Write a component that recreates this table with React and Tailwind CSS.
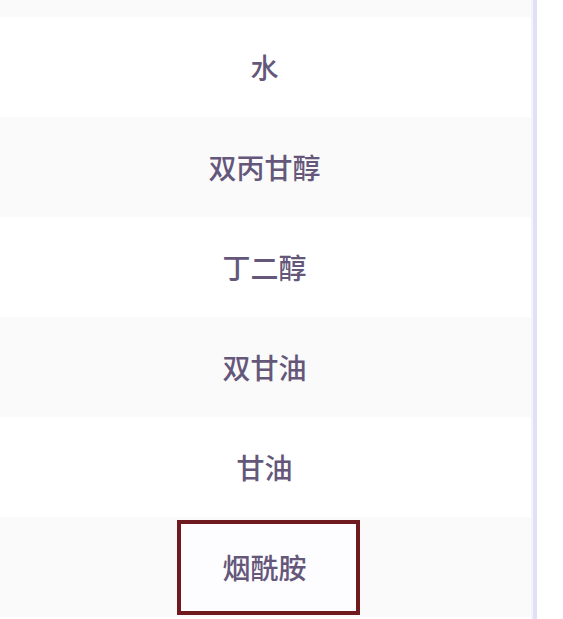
import React from 'react';

const items = ['水', '双丙甘醇', '丁二醇', '双甘油', '甘油', '烟酰胺'];

export default function App() {
	return (
		<div
			className="flex h-[619px] w-[563px] overflow-hidden bg-white"
			style={{fontFamily: '"Noto Sans CJK SC", "Noto Sans", sans-serif'}}
		>
			<div className="flex w-[531px] flex-col">
				<div className="h-[17px] bg-[#fafafa]" />
				{items.map((name, i) => {
					const isLast = i === items.length - 1;
					return (
						<div
							key={name}
							className={`flex h-[100px] items-center justify-center ${i % 2 === 1 ? 'bg-[#fafafa]' : 'bg-white'}`}
						>
							{isLast ? (
								<div className="ml-[6px] flex h-[95px] w-[183px] items-center justify-center border-4 border-[#6e1a1f] bg-[#fdfcff]">
									<span className="mr-[8px] text-[28px] font-medium leading-none text-[#64577a]">{name}</span>
								</div>
							) : (
								<span className="mr-[2px] text-[28px] font-medium leading-none text-[#64577a]">{name}</span>
							)}
						</div>
					);
				})}
			</div>
			<div className="w-[2px] bg-[#f4f3fb]" />
			<div className="w-[4px] bg-[#e2e0f7]" />
			<div className="flex-1 bg-white" />
		</div>
	);
}
